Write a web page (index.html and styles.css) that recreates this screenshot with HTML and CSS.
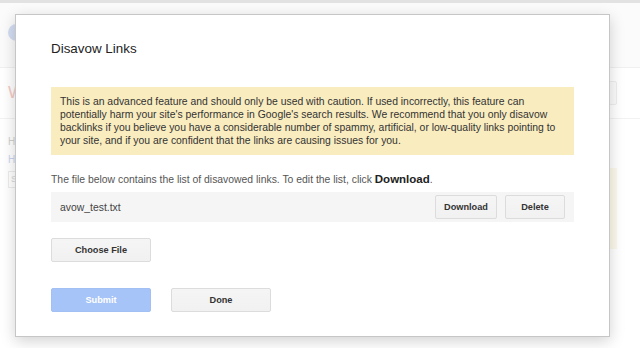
FILE: index.html
```html
<!DOCTYPE html>
<html>
<head>
<meta charset="utf-8">
<link rel="stylesheet" href="styles.css">
</head>
<body>
<div class="page">
  <div class="topbar"></div>
  <header class="masthead"><span class="logo-dot"></span></header>
  <div class="titlebar">
    <span class="pg-title">W</span>
    <span class="pg-box"></span>
  </div>
  <div class="content">
    <div class="main">
      <div class="pg-h1">H</div>
      <div class="pg-h2">H</div>
      <div class="pg-select">S</div>
    </div>
    <div class="side"></div>
  </div>
</div>

<div class="modal">
  <h2 class="modal-title">Disavow Links</h2>
  <div class="warning">This is an advanced feature and should only be used with caution. If used incorrectly, this feature can potentially harm your site's performance in Google's search results. We recommend that you only disavow backlinks if you believe you have a considerable number of spammy, artificial, or low-quality links pointing to your site, and if you are confident that the links are causing issues for you.</div>
  <p class="info">The file below contains the list of disavowed links. To edit the list, click <b>Download</b>.</p>
  <div class="file-row">
    <span class="file-name">avow_test.txt</span>
    <div class="file-actions">
      <button class="btn btn-download">Download</button>
      <button class="btn btn-delete">Delete</button>
    </div>
  </div>
  <div class="choose-row"><button class="btn btn-wide">Choose File</button></div>
  <div class="actions">
    <button class="btn btn-wide btn-primary">Submit</button>
    <button class="btn btn-wide">Done</button>
  </div>
</div>
</body>
</html>
```

FILE: styles.css
```css
html, body {
  margin: 0;
  padding: 0;
  background: #ffffff;
  font-family: "Liberation Sans", Arial, sans-serif;
  width: 640px;
  height: 348px;
  overflow: hidden;
}

.page {
  display: flex;
  flex-direction: column;
}

.topbar {
  height: 3px;
  background: #e2e2e2;
}

.masthead {
  height: 65px;
  background: #fbfbfb;
  border-bottom: 1px solid #f0f0f0;
  box-sizing: border-box;
  display: flex;
  align-items: flex-start;
  padding: 21px 0 0 8px;
}

.logo-dot {
  width: 17px;
  height: 17px;
  border-radius: 50%;
  background: #d3ddf3;
}

.titlebar {
  height: 50px;
  border-bottom: 1px solid #f2f2f2;
  display: flex;
  align-items: center;
  justify-content: space-between;
  padding: 0 23px 0 8px;
}

.pg-title {
  font-size: 17px;
  color: #f4cac5;
}

.pg-box {
  width: 60px;
  height: 22px;
  border: 1px solid #eeeeee;
  border-radius: 2px;
  background: #fbfbfb;
}

.content {
  display: flex;
  justify-content: space-between;
  padding: 14px 23px 0 8px;
}

.main {
  display: flex;
  flex-direction: column;
  align-items: flex-start;
}

.pg-h1, .pg-h2 {
  font-size: 10px;
  line-height: 18px;
}
.pg-h1 { color: #d0d0d0; }
.pg-h2 { color: #c8d4ef; }

.pg-select {
  margin-top: 2px;
  width: 40px;
  height: 15px;
  border: 1px solid #ececec;
  font-size: 9px;
  color: #d8d8d8;
  padding-left: 2px;
  line-height: 15px;
}

.side {
  margin-top: 35px;
  width: 150px;
  height: 81px;
  background: #fcf9ec;
}

/* ---------- dialog ---------- */
.modal {
  position: absolute;
  left: 15px;
  top: 14px;
  width: 523px;
  padding: 26px 35px 24px;
  background: #ffffff;
  border: 1px solid #c6c6c6;
  box-shadow: 0 4px 14px rgba(0, 0, 0, 0.18);
}

.modal-title {
  margin: 0;
  font-size: 13.4px;
  line-height: 16px;
  font-weight: normal;
  color: #222222;
}

.warning {
  margin-top: 30px;
  background: #f9ecbf;
  color: #333333;
  font-size: 10.4px;
  line-height: 13px;
  padding: 8px 9px;
}

.info {
  margin: 18px 0 0;
  font-size: 10.4px;
  line-height: 13px;
  color: #555555;
}

.info b {
  color: #222222;
  font-size: 11.5px;
}

.file-row {
  margin-top: 6px;
  height: 30px;
  background: #f5f5f5;
  display: flex;
  align-items: center;
  justify-content: space-between;
  padding: 0 9px;
}

.file-name {
  font-size: 10.4px;
  color: #444444;
}

.file-actions {
  display: flex;
  gap: 8px;
}

.btn {
  box-sizing: border-box;
  height: 24px;
  border: 1px solid #dcdcdc;
  border-radius: 2px;
  background: linear-gradient(#f5f5f5, #f1f1f1);
  color: #333333;
  font-family: "Liberation Sans", Arial, sans-serif;
  font-weight: bold;
  font-size: 9.2px;
  padding: 0;
  margin: 0;
}

.btn-download { width: 62px; }
.btn-delete { width: 60px; }
.btn-wide { width: 100px; }

.choose-row {
  margin-top: 16px;
  display: flex;
}

.actions {
  margin-top: 26px;
  display: flex;
  gap: 20px;
}

.btn-primary {
  background: #a6c4f7;
  border-color: #a2c0f4;
  color: #ffffff;
}
```
